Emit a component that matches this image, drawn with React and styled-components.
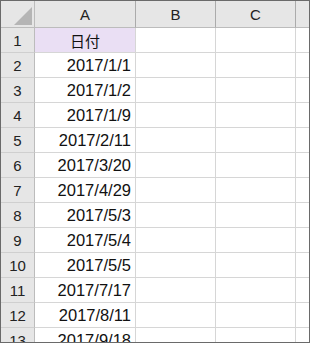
import React from 'react'
import styled, { createGlobalStyle } from 'styled-components'

const GlobalStyle = createGlobalStyle`
    html, body {
        margin: 0;
        padding: 0;
        background: #fff;
    }
    body {
        font-family: "Liberation Sans", "Noto Sans CJK JP", sans-serif;
    }
`;

const rows = [
    '日付',
    '2017/1/1',
    '2017/1/2',
    '2017/1/9',
    '2017/2/11',
    '2017/3/20',
    '2017/4/29',
    '2017/5/3',
    '2017/5/4',
    '2017/5/5',
    '2017/7/17',
    '2017/8/11',
    '2017/9/18',
];

const App = () => {
    return (
        <>
            <GlobalStyle />
            <Frame>
                <Sheet>
                    <Corner>
                        <svg width="18" height="18" viewBox="0 0 18 18">
                            <polygon points="18,0 18,18 0,18" fill="#b5b5b5" />
                        </svg>
                    </Corner>
                    <ColHead>A</ColHead>
                    <ColHead>B</ColHead>
                    <ColHead>C</ColHead>
                    <ColHead $last />

                    {rows.map((value, i) => (
                        <React.Fragment key={i}>
                            <RowHead>{i + 1}</RowHead>
                            <Cell $title={i === 0}>{value}</Cell>
                            <Cell />
                            <Cell />
                            <Cell $last />
                        </React.Fragment>
                    ))}
                </Sheet>
            </Frame>
        </>
    )
}

export default App

const Frame = styled.div`
    width: 310px;
    height: 343px;
    box-sizing: border-box;
    border: 1px solid #6a6a6a;
    overflow: hidden;
    background: #fff;
`;

const Sheet = styled.div`
    display: grid;
    grid-template-columns: 34px 101px 80px 80px 1fr;
    grid-template-rows: 27px;
    grid-auto-rows: 25px;
`;

const Corner = styled.div`
    background: #e6e6e6;
    border-right: 1px solid #bcbcbc;
    border-bottom: 1px solid #bcbcbc;
    display: flex;
    align-items: flex-end;
    justify-content: flex-end;
    padding: 0 2px 2px 0;
    box-sizing: border-box;
`;

const ColHead = styled.div`
    background: #e6e6e6;
    border-right: ${p => (p.$last ? 'none' : '1px solid #ababab')};
    border-bottom: 1px solid #bcbcbc;
    display: flex;
    align-items: center;
    justify-content: center;
    font-size: 15px;
    color: #222;
    padding-top: 1px;
`;

const RowHead = styled.div`
    background: #e6e6e6;
    border-right: 1px solid #bcbcbc;
    border-bottom: 1px solid #cfcfcf;
    display: flex;
    align-items: center;
    justify-content: center;
    font-size: 15px;
    color: #222;
`;

const Cell = styled.div`
    background: ${p => (p.$title ? '#eadff4' : '#fff')};
    border-right: ${p => (p.$last ? 'none' : '1px solid #d6d6d6')};
    border-bottom: 1px solid #d6d6d6;
    display: flex;
    align-items: center;
    justify-content: ${p => (p.$title ? 'center' : 'flex-end')};
    padding-right: ${p => (p.$title ? '0' : '4px')};
    font-size: ${p => (p.$title ? '15px' : '16.5px')};
    color: #111;
    white-space: nowrap;
`;
